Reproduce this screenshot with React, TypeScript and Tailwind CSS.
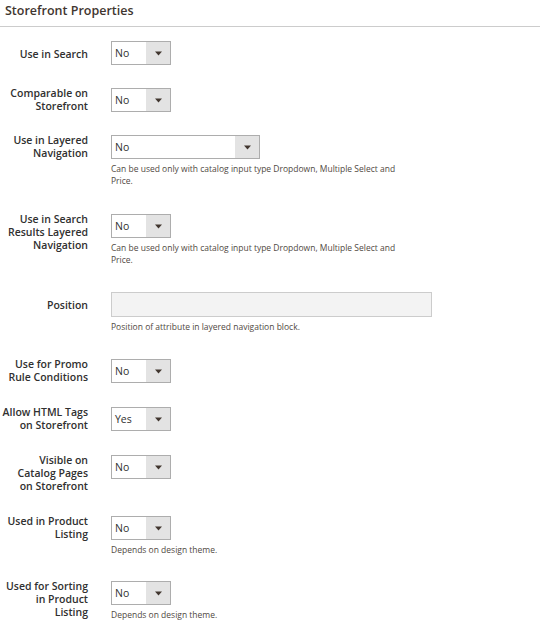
import React from "react";

type Row = {
    label: string[];
    value?: string;
    wide?: boolean;
    input?: boolean;
    note?: string[];
    gap: string;
};

const rows: Row[] = [
    { label: ["Use in Search"], value: "No", gap: "mb-[23px]" },
    { label: ["Comparable on", "Storefront"], value: "No", gap: "mb-[22px]" },
    {
        label: ["Use in Layered", "Navigation"],
        value: "No",
        wide: true,
        note: ["Can be used only with catalog input type Dropdown, Multiple Select and", "Price."],
        gap: "mb-[27px]",
    },
    {
        label: ["Use in Search", "Results Layered", "Navigation"],
        value: "No",
        note: ["Can be used only with catalog input type Dropdown, Multiple Select and", "Price."],
        gap: "mb-[26px]",
    },
    { label: ["Position"], input: true, note: ["Position of attribute in layered navigation block."], gap: "mb-[26px]" },
    { label: ["Use for Promo", "Rule Conditions"], value: "No", gap: "mb-[23px]" },
    { label: ["Allow HTML Tags", "on Storefront"], value: "Yes", gap: "mb-[23px]" },
    { label: ["Visible on", "Catalog Pages", "on Storefront"], value: "No", gap: "mb-[23px]" },
    { label: ["Used in Product", "Listing"], value: "No", note: ["Depends on design theme."], gap: "mb-[25px]" },
    { label: ["Used for Sorting", "in Product", "Listing"], value: "No", note: ["Depends on design theme."], gap: "mb-0" },
];

function Select({ value, wide }: { value: string; wide?: boolean }) {
    return (
        <div className={`flex h-[24px] border border-[#adadad] bg-white ${wide ? "w-[149px]" : "w-[60px]"}`}>
            <span className="flex-1 pl-[3px] text-[10.5px] leading-[22px] text-[#303030]">{value}</span>
            <span className="w-[24px] bg-[#e3e3e3] flex items-center justify-center">
                <svg width="7" height="5" viewBox="0 0 7 5">
                    <path d="M0 0.5h7L3.5 4.5z" fill="#41362f" />
                </svg>
            </span>
        </div>
    );
}

export default function App() {
    return (
        <div className="w-[545px] h-[624px] bg-white overflow-hidden font-['Open_Sans',sans-serif] text-[#303030]">
            <div className="pl-[5px] pt-[2px] h-[26px] text-[12.5px] font-semibold leading-[18px] text-[#41362f]">Storefront Properties</div>
            <div className="h-px w-[540px] bg-[#cccccc]" />
            <div className="pt-[14px]">
                {rows.map((r, i) => (
                    <div key={i} className={`flex items-start ${r.gap}`}>
                        <div
                            className={`w-[88px] shrink-0 text-right text-[10.5px] font-semibold leading-[13px] whitespace-nowrap text-[#303030] ${
                                r.label.length > 1 ? "mt-[-1px]" : "pt-[7px]"
                            }`}
                        >
                            {r.label.map((l, j) => (
                                <div key={j}>{l}</div>
                            ))}
                        </div>
                        <div className="ml-[23px]">
                            {r.input ? (
                                <div className="h-[25px] w-[321px] border border-[#cccccc] bg-[#f3f3f3]" />
                            ) : (
                                <Select value={r.value ?? ""} wide={r.wide} />
                            )}
                            {r.note && (
                                <div className="mt-[4px] text-[8.5px] leading-[12px] text-[#514943]">
                                    {r.note.map((n, j) => (
                                        <div key={j}>{n}</div>
                                    ))}
                                </div>
                            )}
                        </div>
                    </div>
                ))}
            </div>
        </div>
    );
}
